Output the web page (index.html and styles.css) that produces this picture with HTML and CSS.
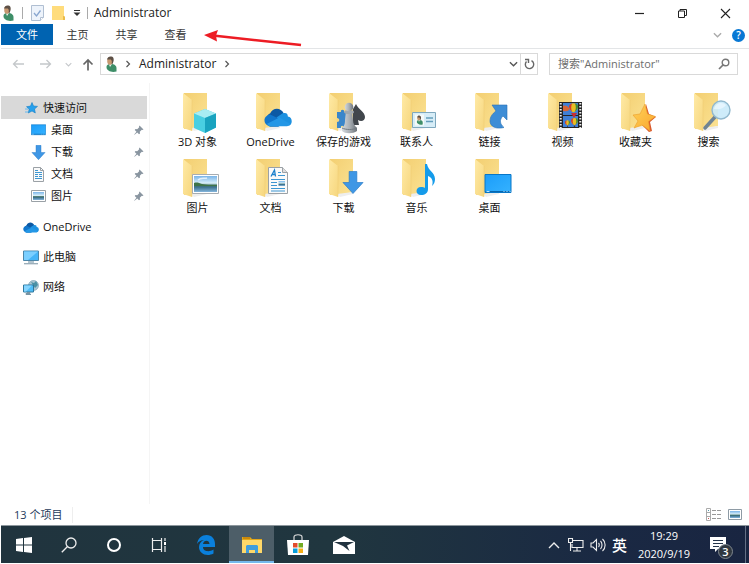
FILE: index.html
```html
<!DOCTYPE html>
<html lang="zh-CN">
<head>
<meta charset="utf-8">
<meta name="viewport" content="width=device-width, initial-scale=1">
<title>Administrator</title>
<link rel="stylesheet" href="styles.css">
</head>
<body>
<svg class="defs" aria-hidden="true">
  <defs>
    <linearGradient id="gBack" x1="0" y1="0" x2="1" y2="1"><stop offset="0" stop-color="#f3cf72"/><stop offset="1" stop-color="#fbe293"/></linearGradient>
    <linearGradient id="gFlap" x1="0" y1="0" x2="1" y2="1"><stop offset="0" stop-color="#ffeaa6"/><stop offset="1" stop-color="#f6d67d"/></linearGradient>
    <linearGradient id="gSky" x1="0" y1="0" x2="0" y2="1"><stop offset="0" stop-color="#79b4e8"/><stop offset=".45" stop-color="#d9effa"/><stop offset=".58" stop-color="#3f6f63"/><stop offset=".7" stop-color="#3e7390"/><stop offset="1" stop-color="#85b6dd"/></linearGradient>
    <linearGradient id="gPawn" x1="0" y1="0" x2="1" y2="0"><stop offset="0" stop-color="#d5d9dd"/><stop offset=".5" stop-color="#a9afb5"/><stop offset="1" stop-color="#6d747b"/></linearGradient>
    <linearGradient id="gStar" x1="0" y1="0" x2="1" y2="1"><stop offset="0" stop-color="#ffd257"/><stop offset="1" stop-color="#f9a62f"/></linearGradient>
    <linearGradient id="gBlue" x1="0" y1="0" x2="1" y2="1"><stop offset="0" stop-color="#1b9dfa"/><stop offset="1" stop-color="#35b2ff"/></linearGradient>
    <symbol id="folder" viewBox="0 0 44 42">
      <path d="M8 1h23v33l-14 3H8z" fill="url(#gBack)"/>
      <path d="M15 36l16-2v2l-13 3z" fill="#eee"/>
      <path d="M7 1l9 7v31l-9-3z" fill="url(#gFlap)"/>
      <path d="M16 8v31" stroke="#ecca70" stroke-width=".5"/>
    </symbol>
    <symbol id="picture" viewBox="0 0 27 20">
      <path d="M.5.5h26v19H.5z" fill="#fff" stroke="#a7adb2"/>
      <path d="M2 2h23v16H2z" fill="url(#gSky)"/>
      <path d="M2 9c3-1 5 0 8 1s9 1 15 1v1H2z" fill="#3f7447"/>
      <path d="M6 6c3-3 6-1 9-2" stroke="#fff" fill="none" stroke-width="1.500" opacity=".7"/>
    </symbol>
    <symbol id="cloud" viewBox="0 0 27 18">
      <path d="M7 17a6.500 6.500 0 0 1-1-12C8-.5 16-1.500 19 5z" fill="#0c59a4"/>
      <path d="M4 17C-1 15-1 7 6 6l12 6-4 6H6z" fill="#1176cc"/>
      <path d="M12 9l6-4c4-1 5 1 5 3 5 0 5 9 0 9z" fill="#1d91e0"/>
      <path d="M3 15l12-6 10 6c-1 2-2 2.500-4 2.500H6c-1 0-2-.5-3-2.500z" fill="#2497e6"/>
    </symbol>
    <symbol id="down" viewBox="0 0 22 24"><path d="M7 .5h8V12h6.500L11 23.500.5 12H7z" fill="#3f97e5" stroke="#2579c7" stroke-width=".7"/></symbol>
    <symbol id="desktop" viewBox="0 0 27 20">
      <path d="M.5.5h26v18H.5z" fill="url(#gBlue)" stroke="#0876c7"/>
      <path d="M1 17.500h25" stroke="#0866ad"/><path d="M2 17.500h3m14 0h1m2 0h1m2 0h1" stroke="#b9e5ff"/>
    </symbol>
    <symbol id="doc" viewBox="0 0 20 27">
      <path d="M.5.5h14l5 5v21H.5z" fill="#fafafa" stroke="#9ba1a6"/><path d="M14.500.5v5h5" fill="#ddd" stroke="#9ba1a6"/>
      <path d="M3 9.500L6.500 3l1 6.500M4.500 7.500h3" fill="none" stroke="#1c81cc" stroke-width="1.300"/>
      <path d="M10 5.500h3m-3 3h7M3 12.500h14M3 15.500h6M3 18.500h6M3 21.500h14M3 24h14" stroke="#3c96d1" stroke-width="1.100"/>
      <path d="M10.500 14h6.500v5h-6.500z" fill="url(#gSky)"/>
    </symbol>
    <symbol id="user" viewBox="0 0 12 16">
      <path d="M1.500 11C1.500 8.500 4 8 6 8c3 0 5.500 1.500 5.500 4v3.500c-3 .8-6 .5-8-1C2 13.500 1.500 12.500 1.500 11z" fill="#3e8e68"/>
      <path d="M4 8.500L5 11 7 8z" fill="#f0f3ef"/>
      <ellipse cx="5" cy="5" rx="2.800" ry="3.800" fill="#c79870"/>
      <path d="M2 3.500C2.500.5 5 0 6.500.6 9 1 9.500 4.500 7.500 8l-1-.5c.7-1.500.3-3-.7-4z" fill="#5d5046"/>
    </symbol>
    <symbol id="balloon" viewBox="0 0 10 13">
      <path d="M5 0C9 0 11 4 9 7L6 10H4L1 7C-1 4 1 0 5 0z" fill="#e9bd22"/>
      <path d="M3.500.5C2 3 2 7 4 10L1 7C-1 4 0 1 3.500.5z" fill="#cf3b32"/>
      <path d="M6.500.5C8 3 8 7 6 10l3-3c2-3 1-6-2.500-6.500z" fill="#3e8b3c"/>
      <path d="M4 11h2v2H4z" fill="#4d3425"/>
    </symbol>
    <symbol id="pin" viewBox="0 0 10 10"><path d="M5.500.5l4 4-1 .5-.7-.2-2 2 .2 1.700-1 .8L3.300 7.500.5 9.800.2 9.500l2.300-2.800L.7 5l.8-1 1.700.2 2-2L5 1.500z" fill="#8995a0"/></symbol>
    <symbol id="chev" viewBox="0 0 10 6"><path d="M1 1l4 4 4-4" fill="none" stroke="currentColor" stroke-width="1.500"/></symbol>
    <symbol id="chevR" viewBox="0 0 6 8"><path d="M1.500 1l3 3-3 3" fill="none" stroke="#555" stroke-width="1.200"/></symbol>
    <symbol id="arrow" viewBox="0 0 12 10"><path d="M12 5H1.500M5.500 1l-4 4 4 4" fill="none" stroke="currentColor" stroke-width="1.300"/></symbol>
  </defs>
</svg>

<div class="window">
  <header class="titlebar">
    <svg class="user-icon"><use href="#user"/></svg>
    <span class="sep"></span>
    <button class="quick" aria-label="属性"><svg width="13" height="16" viewBox="0 0 13 16"><path d="M.5.500h12v12l-3 3h-9z" fill="#edf3fb" stroke="#b0bfd2"/><path d="M12.500 12.500h-3v3" fill="#fff" stroke="#b0bfd2"/><path d="M3 8l2.500 3 4-5.500" fill="none" stroke="#87a5cf" stroke-width="1.300"/></svg></button>
    <button class="quick" aria-label="新建文件夹"><svg width="13" height="16" viewBox="0 0 13 16"><path d="M0 1h12v10l1 1v3H0z" fill="#ffdc7c"/><path d="M12 11l1 1v3h-2v-4z" fill="#eabc4b"/></svg></button>
    <button class="more" aria-label="自定义"><svg width="8" height="6" viewBox="0 0 8 6"><path d="M1 .5h6" stroke="#333"/><path d="M.5 2.500h7L4 6z" fill="#333"/></svg></button>
    <span class="sep"></span>
    <h1>Administrator</h1>
    <div class="controls">
      <button aria-label="最小化"><svg width="11" height="11"><path d="M1 5.500h9" stroke="#222" stroke-width="1.200"/></svg></button>
      <button aria-label="还原"><svg width="11" height="11"><path d="M1.500 3h6v6.500h-6zM3 3V1.500h6.500v6H7.500" fill="none" stroke="#222"/></svg></button>
      <button aria-label="关闭"><svg width="11" height="11"><path d="M1 1l9 9M10 1l-9 9" stroke="#222" stroke-width="1.100"/></svg></button>
    </div>
  </header>

  <nav class="ribbon">
    <button class="tab file">文件</button>
    <button class="tab">主页</button>
    <button class="tab">共享</button>
    <button class="tab">查看</button>
    <div class="ribbon-end">
      <button aria-label="展开功能区"><svg class="chev pale"><use href="#chev"/></svg></button>
      <button class="help" aria-label="帮助">?</button>
    </div>
    <svg class="callout" width="102" height="24" viewBox="0 0 102 24" aria-hidden="true"><path d="M10 7.500L98 17" stroke="#ed1c24" stroke-width="2.500"/><path d="M1 7L15 2l-2 5.500 1 6z" fill="#ed1c24"/></svg>
  </nav>

  <div class="location">
    <div class="history">
      <button class="faint" aria-label="后退"><svg width="12" height="10"><use href="#arrow"/></svg></button>
      <button class="faint" aria-label="前进"><svg class="flip" width="12" height="10"><use href="#arrow"/></svg></button>
      <button class="faint small" aria-label="最近位置"><svg width="7" height="5"><use href="#chev"/></svg></button>
      <button class="up" aria-label="上移"><svg width="12" height="13" viewBox="0 0 12 13"><path d="M6 12.500V2M1.500 6.500L6 2l4.500 4.500" fill="none" stroke="#666" stroke-width="1.700"/></svg></button>
    </div>
    <div class="address">
      <svg class="user-icon"><use href="#user"/></svg>
      <svg width="6" height="8"><use href="#chevR"/></svg>
      <a href="#">Administrator</a>
      <svg width="6" height="8"><use href="#chevR"/></svg>
      <button class="drop" aria-label="历史记录"><svg class="chev"><use href="#chev"/></svg></button>
      <button class="refresh" aria-label="刷新"><svg width="11" height="12" viewBox="0 0 11 12"><path d="M2.500 3.500A4.200 4.200 0 1 0 7.500 2.700M1 1.500h3.500V5" fill="none" stroke="#666" stroke-width="1.400"/></svg></button>
    </div>
    <label class="search">
      <input type="text" placeholder='搜索"Administrator"' aria-label="搜索">
      <svg width="12" height="12" viewBox="0 0 12 12"><circle cx="7.500" cy="4.500" r="3.300" fill="none" stroke="#777" stroke-width="1.400"/><path d="M5 7l-4 4" stroke="#777" stroke-width="1.700"/></svg>
    </label>
  </div>

  <div class="body">
    <nav class="sidebar">
      <a class="side quick-access" href="#"><svg width="13" height="12" viewBox="0 0 13 12"><path d="M7 .5l1.500 3.500 4 .4-3 2.600.8 4L7 9l-3.700 2 .9-4-2.700-2.300 4-.6z" fill="#26a0ed" stroke="#147dc4" stroke-width=".6"/><path d="M0 7h3M0 10h3" stroke="#67b8ee"/></svg>快速访问</a>
      <a class="side child" href="#"><svg width="15" height="12"><use href="#desktop"/></svg>桌面<svg class="pin"><use href="#pin"/></svg></a>
      <a class="side child" href="#"><svg width="15" height="15"><use href="#down"/></svg>下载<svg class="pin"><use href="#pin"/></svg></a>
      <a class="side child" href="#"><svg width="15" height="15" viewBox="0 0 15 15"><path d="M2.500.5h7l3 3v11h-10z" fill="#fafafa" stroke="#9ba1a6"/><path d="M9.500.5v3h3" fill="none" stroke="#9ba1a6"/><path d="M4 3.500h3M4 5.500h7M4 7.500h3m1 0h3M4 9.500h3m1 0h3M4 11.500h7" stroke="#3c96d1"/></svg>文档<svg class="pin"><use href="#pin"/></svg></a>
      <a class="side child" href="#"><svg width="15" height="12" viewBox="0 0 15 12"><path d="M.5.500h14v11H.5z" fill="#fff" stroke="#9aa1a6"/><path d="M2 2h11v8H2z" fill="url(#gSky)"/></svg>图片<svg class="pin"><use href="#pin"/></svg></a>
      <div class="roots">
        <a class="side root" href="#"><svg width="16" height="11"><use href="#cloud"/></svg>OneDrive</a>
        <a class="side root" href="#"><svg width="16" height="15" viewBox="0 0 16 15"><path d="M.5 1h15v9.500H.5z" fill="#46b5f8" stroke="#4c86a9"/><path d="M1 1.500h14L5 10H1z" fill="#7bcfff"/><path d="M5 11h6v2H5z" fill="#b2c4ce"/><path d="M1 13.700h14" stroke="#96aab7" stroke-width="1.300"/></svg>此电脑</a>
        <a class="side root" href="#"><svg width="16" height="15" viewBox="0 0 16 15"><circle cx="10.500" cy="5.500" r="5" fill="#acc6d2" stroke="#7199ae" stroke-width=".6"/><path d="M8 2l3 1 2-2 2 4-3 3-2-3z" fill="#4b91a5"/><path d="M.5 5h10v7H.5z" fill="#50bdf7" stroke="#2f789e"/><path d="M1 5.500h8L3 11.500H1z" fill="#86d5ff"/><path d="M4 12.500h3v1H3v1h5" stroke="#7794a4" fill="none"/></svg>网络</a>
      </div>
    </nav>

    <main class="files">
      <a class="item" href="#"><svg viewBox="0 0 44 42"><use href="#folder"/><path d="M29 17l11 4.500v14L29 41l-11-5V21.500z" fill="#49cfe2"/><path d="M29 17l11 4.500L29 26l-11-4.500z" fill="#a9edf3"/><path d="M29 26l11-4.500v14L29 41z" fill="#19a3bf"/></svg><span>3D 对象</span></a>
      <a class="item" href="#"><svg viewBox="0 0 44 42"><use href="#folder"/><use href="#cloud" x="15" y="16" width="28" height="19"/></svg><span>OneDrive</span></a>
      <a class="item" href="#"><svg viewBox="0 0 44 42"><use href="#folder"/><path d="M15 20h4c-1-3 4-3 3 0h4v16h-4c0-3-4-3-3 0h-4v-6c3 0 3-4 0-4z" fill="#3a86ca"/><path d="M34 12c2 5 9 8 9 13 0 4-4 5-7 3l1 5h-6V17z" fill="#41464c"/><path d="M24 19h6l1 9c0 4 2 6 4 8v3c-4 3-12 3-15 0v-3c3-2 3-6 3-8z" fill="url(#gPawn)"/><ellipse cx="27" cy="20" rx="5" ry="2" fill="#a1a8ae"/><circle cx="27" cy="15" r="4.300" fill="url(#gPawn)"/><path d="M20 36c4 2 11 2 15 0" fill="none" stroke="#737b82"/></svg><span>保存的游戏</span></a>
      <a class="item" href="#"><svg viewBox="0 0 44 42"><use href="#folder"/><path d="M17.500 20.500h23v15h-23z" fill="#d7edf7" stroke="#7fa8be"/><path d="M20 22.500h9v11h-9z" fill="#f5faf9"/><use href="#user" x="21" y="23" width="7" height="10"/><path d="M31 26h7M31 29.500h7" stroke="#659ebc" stroke-width="1.300"/></svg><span>联系人</span></a>
      <a class="item" href="#"><svg viewBox="0 0 44 42"><use href="#folder"/><path d="M24 13h15v15l-4-4c-4 4-3 8 1 11.500-8 2-14-1-14-6.500 0-4 2-7 6-10z" fill="#3d8dd6" stroke="#2871b5" stroke-width=".6"/></svg><span>链接</span></a>
      <a class="item" href="#"><svg viewBox="0 0 44 42"><use href="#folder"/><path d="M18 10h23v26H18z" fill="#252525"/><path d="M22 11h15v12H22zM22 24h15v11H22z" fill="#3f7fd6"/><path d="M19.700 11v25M39.300 11v25" stroke="#eee" stroke-width="2" stroke-dasharray="1.500 1.500"/><path d="M22 14c2-1 5 0 6 2s-1 4-6 3z" fill="#d76536"/><use href="#balloon" x="28" y="11" width="9" height="12"/><use href="#balloon" x="30" y="26" width="7" height="9"/><use href="#balloon" x="24" y="28" width="5" height="7"/><path d="M30 21h6l-3 5z" fill="#c72d36"/></svg><span>视频</span></a>
      <a class="item" href="#"><svg viewBox="0 0 44 42"><use href="#folder"/><path d="M32 12l3 10 7 3-6 5 2 9-3 1-7-7z" fill="#d9582c"/><path d="M31 12l2.500 10 8 2.500-7 5L36 39l-8-6-8 3 4-7-5-6 7-1z" fill="url(#gStar)" stroke="#eb9d2c" stroke-width=".6"/></svg><span>收藏夹</span></a>
      <a class="item" href="#"><svg viewBox="0 0 44 42"><use href="#folder"/><path d="M28 25L18 36" stroke="#708493" stroke-width="3.500" stroke-linecap="round"/><circle cx="34" cy="18" r="9" fill="#c9eafa" fill-opacity=".9" stroke="#92b9ce" stroke-width="1.400"/><path d="M27 17c1-6 8-8 12-4-3 4-7 5-12 4z" fill="#effaff" opacity=".7"/></svg><span>搜索</span></a>
      <a class="item" href="#"><svg viewBox="0 0 44 42"><use href="#folder"/><use href="#picture" x="16" y="16" width="27" height="20"/></svg><span>图片</span></a>
      <a class="item" href="#"><svg viewBox="0 0 44 42"><use href="#folder"/><use href="#doc" x="19" y="9" width="20" height="27"/></svg><span>文档</span></a>
      <a class="item" href="#"><svg viewBox="0 0 44 42"><use href="#folder"/><use href="#down" x="20" y="13" width="22" height="23"/></svg><span>下载</span></a>
      <a class="item" href="#"><svg viewBox="0 0 44 42"><use href="#folder"/><path d="M30 6h2c1 7 8 8 8 15 0 3-1 5-3 7 2-6-1-9-4-10v13c0 4-3 6-7 6-6 0-6-8 0-8 2 0 3 0 4 1z" fill="#149bea"/></svg><span>音乐</span></a>
      <a class="item" href="#"><svg viewBox="0 0 44 42"><use href="#folder"/><use href="#desktop" x="16" y="16" width="28" height="20"/></svg><span>桌面</span></a>
    </main>
  </div>

  <footer class="status">
    <span class="count">13 个项目</span>
    <div class="views">
      <button aria-label="详细信息"><svg width="16" height="13" viewBox="0 0 16 13"><path d="M.5.500h4v12h-4zM.5 4.500h4M.5 8.500h4" fill="#fff" stroke="#aaa"/><path d="M2 2.500h1" stroke="#59a"/><path d="M2 10.500h1" stroke="#c55"/><path d="M6 2.500h4m1 0h4m-9 4h4m1 0h4m-9 4h4m1 0h4" stroke="#999"/></svg></button>
      <button aria-label="大图标"><svg width="14" height="11" viewBox="0 0 14 11"><path d="M.5.500h13v10H.5z" fill="#fff" stroke="#8e9ba5"/><path d="M2 2h10v7H2z" fill="url(#gSky)"/></svg></button>
    </div>
  </footer>
</div>

<div class="taskbar">
  <button aria-label="开始"><svg width="16" height="16" viewBox="0 0 16 16"><path d="M0 2l7-1v6.500H0zM8 1l8-1v7.500H8zM0 8.500h7V15l-7-1zM8 8.500h8V16l-8-1z" fill="#fff"/></svg></button>
  <button aria-label="搜索"><svg width="16" height="16" viewBox="0 0 16 16"><circle cx="10" cy="6" r="5" fill="none" stroke="#eee" stroke-width="1.300"/><path d="M6.500 9.500L.8 15.200" stroke="#eee" stroke-width="1.300"/></svg></button>
  <button aria-label="Cortana"><svg width="16" height="16"><circle cx="8" cy="8" r="6" fill="none" stroke="#fff" stroke-width="2"/></svg></button>
  <button aria-label="任务视图"><svg width="16" height="16" viewBox="0 0 16 16"><path d="M1.500 1v2.500h9V1M1.500 15v-2.500h9V15M1.500 3.500v9m9-9v9M14 1v3m0 5v6" fill="none" stroke="#eee" stroke-width="1.200"/><path d="M13 5h2v3h-2z" fill="#fff"/></svg></button>
  <div class="pinned">
    <button aria-label="Edge"><svg width="20" height="20" viewBox="0 0 20 20"><path d="M1 9C2 3 6 0 10.500 0 16 0 19 4 19 9v3H7c0 5 7 5 10.500 2.500v4C11 22 3 19 3 12c0-3 2-6 5-7-3 0-5 1-7 4zm6 0h6.500C13.500 4.500 7.500 4.500 7 9z" fill="#0a80dc"/></svg></button>
    <button class="active" aria-label="文件资源管理器"><svg width="20" height="18" viewBox="0 0 20 18"><path d="M0 1h8l2 2h10v14H0z" fill="#e2a719"/><path d="M1 1h7v2H1z" fill="#c9880b"/><path d="M0 4h20v13H0z" fill="#ffd869"/><path d="M4 17v-7l1-1h10l1 1v7h-3v-3H7v3z" fill="#409ddd"/></svg></button>
    <button aria-label="应用商店"><svg width="22" height="22" viewBox="0 0 22 22"><path d="M7 7V3c0-3 8-3 8 0v4" fill="none" stroke="#ddd" stroke-width="1.200"/><path d="M0 6h22l-1 15H1z" fill="#fff"/><path d="M6 9h4.500v4.500H6z" fill="#e34c2d"/><path d="M11.500 9H16v4.500h-4.500z" fill="#72ab22"/><path d="M6 14.500h4.500V19H6z" fill="#079edc"/><path d="M11.500 14.500H16V19h-4.500z" fill="#f6af17"/></svg></button>
    <button aria-label="邮件"><svg width="24" height="18" viewBox="0 0 24 18"><path d="M1 6l11-6 11 6v12H1z" fill="#fff"/><path d="M2 6h20l-7 3.500 2.500 5.500L11 10z" fill="#20323f"/></svg></button>
  </div>
  <div class="tray">
    <button aria-label="显示隐藏的图标"><svg width="12" height="8" viewBox="0 0 12 8"><path d="M1 7l5-5 5 5" fill="none" stroke="#eee" stroke-width="1.400"/></svg></button>
    <button aria-label="网络"><svg width="16" height="14" viewBox="0 0 16 14"><path d="M5 2.500h10v7H4V6M9 10v3m-4 0h8M.5.500h4v4h-4zM2.500 5v8" fill="none" stroke="#eee" stroke-width="1.100"/></svg></button>
    <button aria-label="音量"><svg width="16" height="14" viewBox="0 0 16 14"><path d="M1 5v4h2l3.500 3.500v-11L3 5zM8.500 5c1 1 1 3 0 4m2-6c2 2 2 6 0 8m2-10c3.500 3 3.500 9 0 12" fill="none" stroke="#eee" stroke-width="1.100"/></svg></button>
    <button class="ime">英</button>
    <button class="clock"><time>19:29</time><time>2020/9/19</time></button>
    <button class="notices" aria-label="通知"><svg width="16" height="15" viewBox="0 0 16 15"><path d="M0 0h16v12H8l-3 3v-3H0z" fill="#fff"/><path d="M3 3.500h10M3 6.500h10M3 9.500h6" stroke="#26364b" stroke-width="1.200"/></svg><span class="badge">3</span></button>
  </div>
</div>
</body>
</html>
```

FILE: styles.css
```css
* { box-sizing: border-box; }
body {
  margin: 0;
  min-height: 100vh;
  padding: 0 0 1px 1px;
  display: flex;
  flex-direction: column;
  background: #fff;
  color: #111;
  font: 11px/16px "Open Sans", "Noto Sans CJK SC", sans-serif;
}
button {
  display: flex;
  align-items: center;
  justify-content: center;
  padding: 0;
  border: 0;
  background: none;
  color: inherit;
  font: inherit;
}
a { color: inherit; text-decoration: none; }
svg { flex: none; display: block; }
.defs { position: absolute; width: 0; height: 0; }
.window { flex: 1; display: flex; flex-direction: column; }
.user-icon { width: 12px; height: 16px; }
.chev { width: 9px; height: 6px; color: #555; }
.flip { transform: scaleX(-1); }

.titlebar { display: flex; align-items: center; height: 24px; padding: 2px 2px 0 1px; }
.titlebar .sep { width: 1px; height: 12px; margin: 0 8px; background: #aaa; }
.titlebar .quick { margin-right: 8px; }
.titlebar .more + .sep { margin: 0 6px; }
.titlebar h1 { margin: 0; font-size: 12px; font-weight: 400; }
.titlebar h1, .address a { color: #222; }
.controls { display: flex; margin-left: auto; }
.controls button { width: 43px; height: 22px; }

.ribbon { position: relative; display: flex; height: 25px; border-bottom: 1px solid #e3e5e7; }
.tab { width: 49px; height: 21px; color: #333; }
.tab.file { width: 52px; background: #0063b1; color: #fff; }
.ribbon-end { display: flex; align-items: center; gap: 10px; margin-left: auto; padding: 0 4px 2px 0; }
.chev.pale { color: #aaa; }
.help { width: 13px; height: 13px; border-radius: 50%; background: #0878d4; color: #fff; font-size: 10px; font-weight: 600; line-height: 13px; }
.callout { position: absolute; left: 202px; top: 4px; }

.location { display: flex; align-items: center; padding: 4px 11px 0; }
.history { display: flex; align-items: center; width: 88px; gap: 16px; }
.history .faint { color: #c4c7ca; }
.history .small { margin: 0 -6px 0 -3px; }
.address { flex: 1; display: flex; align-items: center; gap: 8px; height: 22px; padding-left: 4px; border: 1px solid #d9d9d9; }
.address a { font-size: 12px; }
.drop { margin-left: auto; }
.refresh { align-self: stretch; width: 17px; margin-left: -6px; border-left: 1px solid #d9d9d9; }
.search { display: flex; align-items: center; width: 189px; height: 22px; margin-left: 11px; padding: 0 7px 0 8px; border: 1px solid #d9d9d9; }
.search input { flex: 1; min-width: 0; padding: 0; border: 0; outline: 0; background: none; font: inherit; }
.search input::placeholder { color: #6d6d6d; opacity: 1; }

.body { flex: 1; display: flex; padding-top: 8px; }
.sidebar { width: 149px; padding: 13px 2px 0 0; border-right: 1px solid #f5f5f5; }
.side { display: flex; align-items: center; gap: 5px; height: 22px; }
.quick-access { height: 23px; padding-left: 24px; background: #d9d9d9; }
.child { padding: 0 3px 0 30px; }
.pin { width: 10px; height: 10px; margin-left: auto; }
.roots { padding-top: 5px; }
.root { height: 30px; gap: 4px; padding-left: 22px; }
.files { flex: 1; display: grid; grid-template-columns: repeat(auto-fill, 73px); grid-auto-rows: 66px; align-content: start; padding: 9px 0 0 11px; }
.item { display: flex; flex-direction: column; align-items: center; }
.item svg { width: 44px; height: 42px; }
.item span { white-space: nowrap; }

.status { display: flex; align-items: center; height: 21px; padding: 0 7px 0 13px; color: #1e395b; }
.count { padding-right: 10px; border-right: 1px solid #eee; }
.views { display: flex; align-items: center; gap: 6px; margin-left: auto; }

.taskbar { display: flex; height: 38px; border-top: 1px solid #8d979d; background: linear-gradient(90deg, #20343e, #20363f 45%, #1a2943 80%, #192541); color: #fff; }
.taskbar > button, .pinned button { width: 45px; }
.pinned { display: flex; gap: 1px; margin-left: 2px; }
.pinned .active { background: #4d5e68; box-shadow: inset 0 -2px #76b9ed; }
.tray { display: flex; gap: 6px; margin-left: auto; padding-right: 3px; }
.tray button:first-child { margin-right: 2px; }
.ime { font-size: 15px; font-weight: 500; }
.clock { flex-direction: column; width: 60px; margin-left: 1px; line-height: 18px; }
.notices { position: relative; width: 46px; padding-right: 10px; border-right: 1px solid #657085; }
.badge { position: absolute; right: 12px; bottom: 4px; width: 15px; height: 15px; border: 1px solid #808890; border-radius: 50%; background: #303840; font-weight: 600; line-height: 13px; }
```
